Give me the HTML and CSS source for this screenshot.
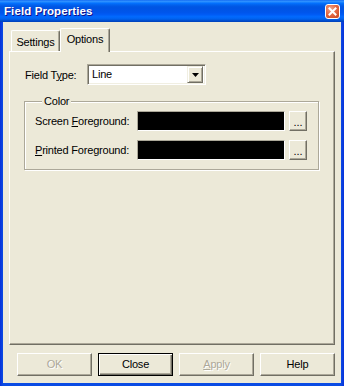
FILE: index.html
```html
<!DOCTYPE html>
<html>
<head>
<meta charset="utf-8">
<link rel="stylesheet" href="styles.css">
</head>
<body>
<div class="window">
  <div class="titlebar">
    <span class="title">Field Properties</span>
    <button class="close" aria-label="Close">
      <svg width="13" height="13" viewBox="0 0 13 13"><path d="M3.5 3.5 L9.5 9.5 M9.5 3.5 L3.5 9.5" stroke="#fff" stroke-width="2" stroke-linecap="square"/></svg>
    </button>
  </div>
  <div class="frame">
    <div class="client">
      <div class="tabs">
        <div class="tab">Settings</div>
        <div class="tab active">Options</div>
      </div>
      <div class="panel">
        <div class="field-row">
          <label class="field-label">Field T<u>y</u>pe:</label>
          <div class="combo">
            <span class="combo-value">Line</span>
            <span class="combo-btn">
              <svg width="7" height="4" viewBox="0 0 7 4"><polygon points="0,0 7,0 3.5,4" fill="#000"/></svg>
            </span>
          </div>
        </div>
        <fieldset class="group">
          <legend>Color</legend>
          <div class="color-row">
            <span class="color-label">Screen <u>F</u>oreground:</span>
            <span class="swatch"></span>
            <button class="dots">...</button>
          </div>
          <div class="color-row">
            <span class="color-label"><u>P</u>rinted Foreground:</span>
            <span class="swatch"></span>
            <button class="dots">...</button>
          </div>
        </fieldset>
      </div>
      <div class="buttons">
        <button class="btn disabled">OK</button>
        <button class="btn default">Close</button>
        <button class="btn disabled"><u>A</u>pply</button>
        <button class="btn">Help</button>
      </div>
    </div>
  </div>
</div>
</body>
</html>
```
FILE: styles.css
```css
html, body {
  margin: 0;
  padding: 0;
  background: #fff;
}
body {
  font-family: "Liberation Sans", Arial, sans-serif;
  font-size: 11px;
  letter-spacing: -0.2px;
  color: #000;
}
.window {
  width: 344px;
  height: 386px;
  display: flex;
  flex-direction: column;
  background: #0A46E0;
}
.titlebar {
  height: 22px;
  flex: none;
  display: flex;
  align-items: center;
  justify-content: space-between;
  padding: 0 4px 0 4px;
  background: linear-gradient(180deg, #0058ee 0%, #3593ff 4%, #288eff 8%, #127dff 12%, #036ffc 16%, #0262ee 22%, #0057e5 30%, #0054e3 36%, #0055eb 56%, #005bf5 66%, #026afe 76%, #0062ef 86%, #0052d6 92%, #0046c4 96%, #0042bb 100%);
}
.title {
  color: #fff;
  font-weight: bold;
  font-size: 11.5px;
  letter-spacing: 0.1px;
  text-shadow: 1px 1px 0 #0F1089;
  margin-top: -1px;
}
.close {
  width: 15px;
  height: 15px;
  padding: 0;
  margin: 0;
  border: 1px solid #fff;
  border-radius: 3px;
  background: radial-gradient(circle at 35% 30%, #F2A48A 0%, #E46A45 45%, #C9441C 100%);
  display: flex;
  align-items: center;
  justify-content: center;
}
.close svg {
  display: block;
}
.frame {
  flex: 1;
  display: flex;
  padding: 0 3px 3px 3px;
  background: linear-gradient(90deg, #0831D9 0, #0A4BE4 3px, #0A4BE4 calc(100% - 3px), #0831D9 100%);
}
.client {
  flex: 1;
  display: flex;
  flex-direction: column;
  background: #ECE9D8;
  padding: 6px 6px 7px 6px;
}
.tabs {
  display: flex;
  align-items: flex-end;
  height: 24px;
  flex: none;
  padding-left: 2px;
  margin-bottom: -1px;
  position: relative;
  z-index: 1;
}
.tab {
  box-sizing: border-box;
  width: 49px;
  height: 21px;
  margin-bottom: 1px;
  background: #ECE9D8;
  border-top: 1px solid #fff;
  border-left: 1px solid #fff;
  border-right: 1px solid #716F64;
  box-shadow: inset -1px 0 0 #ACA899;
  border-radius: 2px 2px 0 0;
  text-align: center;
  line-height: 13px;
  padding-top: 5px;
}
.tab.active {
  width: 50px;
  height: 24px;
  margin-bottom: 0;
  padding-top: 4px;
}
.panel {
  flex: 1;
  background: #ECE9D8;
  border-top: 1px solid #fff;
  border-left: 1px solid #fff;
  border-right: 1px solid #716F64;
  border-bottom: 1px solid #716F64;
  box-shadow: inset -1px -1px 0 #ACA899;
  padding: 12px 15px 0 14px;
}
.field-row {
  display: flex;
  align-items: center;
  height: 21px;
}
.field-label {
  width: 62px;
  padding-left: 1px;
  flex: none;
}
.combo {
  box-sizing: border-box;
  width: 119px;
  height: 21px;
  display: flex;
  align-items: center;
  justify-content: space-between;
  background: #fff;
  border-top: 1px solid #ACA899;
  border-left: 1px solid #ACA899;
  border-right: 1px solid #fff;
  border-bottom: 1px solid #fff;
  box-shadow: inset 1px 1px 0 #716F64, inset -1px -1px 0 #F1EFE2;
  padding: 2px 2px 2px 4px;
}
.combo-value {
  line-height: 13px;
}
.combo-btn {
  box-sizing: border-box;
  width: 16px;
  height: 17px;
  background: #ECE9D8;
  border-top: 1px solid #F1EFE2;
  border-left: 1px solid #F1EFE2;
  border-right: 1px solid #716F64;
  border-bottom: 1px solid #716F64;
  box-shadow: inset 1px 1px 0 #fff, inset -1px -1px 0 #ACA899;
  display: flex;
  align-items: center;
  justify-content: center;
  padding-top: 1px;
}
.combo-btn svg {
  display: block;
}
.group {
  margin: 10px 0 0 0;
  padding: 3px 10px 9px 10px;
  border: 1px solid #ACA899;
  box-shadow: inset 1px 1px 0 #fff, 1px 1px 0 #fff;
  min-width: 0;
  display: flex;
  flex-direction: column;
  gap: 9px;
}
.group legend {
  margin-left: 7px;
  padding: 0 2px;
  line-height: 13px;
  background: #ECE9D8;
}
.color-row {
  display: flex;
  align-items: center;
  height: 20px;
}
.color-label {
  width: 102px;
  flex: none;
}
.swatch {
  box-sizing: border-box;
  width: 148px;
  height: 20px;
  background: #000;
  border-top: 1px solid #ACA899;
  border-left: 1px solid #ACA899;
  border-right: 1px solid #fff;
  border-bottom: 1px solid #fff;
  flex: none;
}
.dots {
  box-sizing: border-box;
  width: 18px;
  height: 20px;
  margin: 0 0 0 4px;
  padding: 3px 0 0 0;
  font-family: "Liberation Sans", Arial, sans-serif;
  font-size: 11px;
  line-height: 13px;
  color: #000;
  background: #ECE9D8;
  border-top: 1px solid #fff;
  border-left: 1px solid #fff;
  border-right: 1px solid #716F64;
  border-bottom: 1px solid #716F64;
  box-shadow: inset -1px -1px 0 #ACA899;
  text-align: center;
}
.buttons {
  flex: none;
  display: flex;
  justify-content: flex-end;
  gap: 6px;
  margin-top: 8px;
}
.btn {
  box-sizing: border-box;
  width: 75px;
  height: 23px;
  margin: 0;
  padding: 0;
  font-family: "Liberation Sans", Arial, sans-serif;
  font-size: 11px;
  letter-spacing: -0.2px;
  line-height: 13px;
  color: #000;
  background: #ECE9D8;
  border-top: 1px solid #fff;
  border-left: 1px solid #fff;
  border-right: 1px solid #716F64;
  border-bottom: 1px solid #716F64;
  box-shadow: inset -1px -1px 0 #ACA899;
  text-align: center;
}
.btn.default {
  border: 1px solid #000;
  box-shadow: inset 1px 1px 0 #fff, inset -1px -1px 0 #716F64, inset -2px -2px 0 #ACA899;
}
.btn.disabled {
  color: #ACA899;
  text-shadow: 1px 1px 0 #fff;
}
```
